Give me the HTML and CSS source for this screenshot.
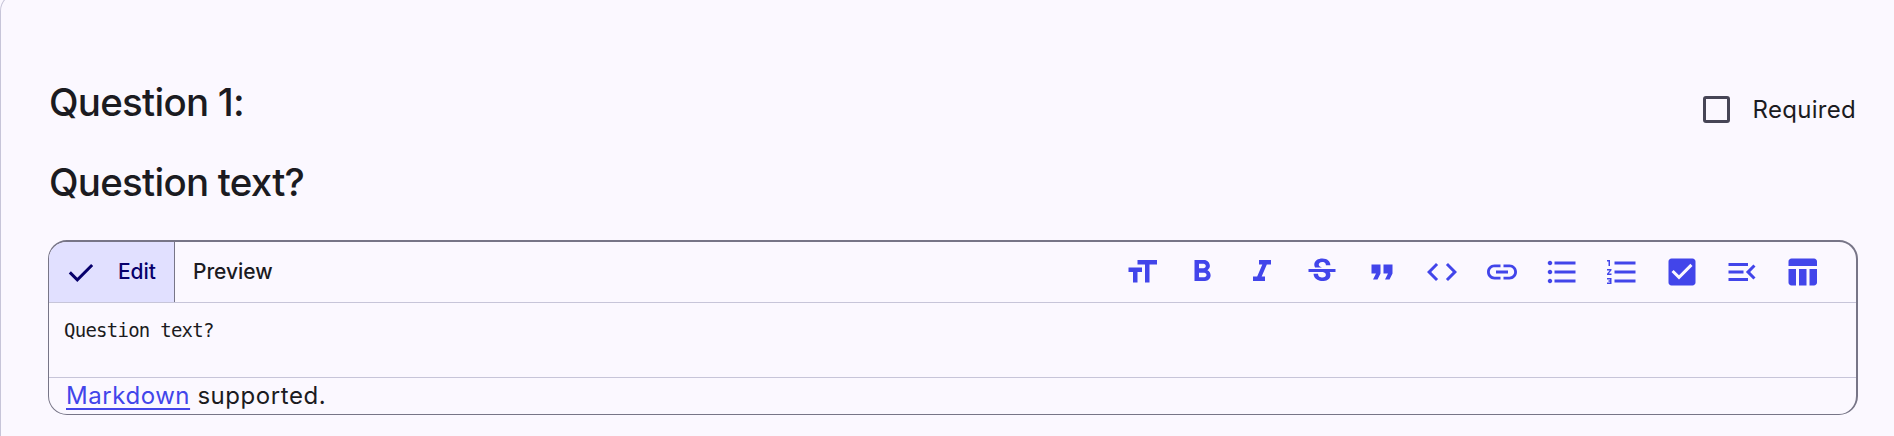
FILE: index.html
```
<!DOCTYPE html>
<html lang="en">
<head>
<meta charset="utf-8">
<title>Question editor</title>
<link rel="stylesheet" href="styles.css">
</head>
<body>
<main class="card">
  <header class="head">
    <h2 class="title">Question 1:</h2>
    <label class="required"><span class="box"></span><span class="required-text">Required</span></label>
  </header>
  <h2 class="title question">Question text?</h2>
  <section class="editor">
    <div class="toolbar">
      <div class="tab active">
        <svg class="check" viewBox="0 -960 960 960"><path d="M382-240 154-468l57-57 171 171 367-367 57 57-424 424Z"/></svg>
        <span class="tab-text">Edit</span>
      </div>
      <div class="tab preview"><span class="tab-text">Preview</span></div>
      <div class="tools">
        <svg class="icon" viewBox="0 0 24 24"><path d="M9 4v3h5v12h3V7h5V4H9zm-6 8h3v7h3v-7h3V9H3v3z"/></svg>
        <svg class="icon" viewBox="0 0 24 24"><path d="M15.6 10.79c.97-.67 1.65-1.77 1.65-2.79 0-2.26-1.75-4-4-4H7v14h7.04c2.09 0 3.71-1.7 3.71-3.79 0-1.52-.86-2.82-2.15-3.42zM10 6.5h3c.83 0 1.5.67 1.5 1.5s-.67 1.5-1.5 1.5h-3v-3zm3.5 9H10v-3h3.5c.83 0 1.5.67 1.5 1.5s-.67 1.5-1.5 1.5z"/></svg>
        <svg class="icon" viewBox="0 0 24 24"><path d="M10 4v3h2.21l-3.42 8H6v3h8v-3h-2.21l3.42-8H18V4z"/></svg>
        <svg class="icon" viewBox="0 0 24 24"><path d="M6.85 7.08C6.85 4.37 9.45 3 12.24 3c1.64 0 3 .49 3.9 1.28.77.65 1.46 1.73 1.46 3.24h-3.01c0-.31-.05-.59-.15-.85-.29-.86-1.2-1.28-2.25-1.28-1.86 0-2.34 1.02-2.34 1.7 0 .48.25.88.74 1.21.38.25.77.48 1.41.7H7.39c-.21-.34-.54-.89-.54-1.92zM21 12v-2H3v2h9.62c1.15.45 1.96.75 1.96 1.97 0 1-.81 1.67-2.28 1.67-1.54 0-2.93-.54-2.93-2.51H6.4c0 .55.08 1.13.24 1.58.81 2.29 3.29 3.3 5.67 3.3 2.27 0 5.3-.89 5.3-4.05 0-.3-.01-1.16-.48-1.94H21z"/></svg>
        <svg class="icon" viewBox="0 0 24 24"><path d="M6 17h3l2-4V7H5v6h3zm8 0h3l2-4V7h-6v6h3z"/></svg>
        <svg class="icon" viewBox="0 0 24 24"><path d="M9.4 16.6 4.8 12l4.6-4.6L8 6l-6 6 6 6zm5.2 0 4.6-4.6-4.6-4.6L16 6l6 6-6 6z"/></svg>
        <svg class="icon" viewBox="0 0 24 24"><path d="M3.9 12c0-1.71 1.39-3.1 3.1-3.1h4V7H7c-2.76 0-5 2.24-5 5s2.24 5 5 5h4v-1.9H7c-1.71 0-3.1-1.39-3.1-3.1zM8 13h8v-2H8v2zm9-6h-4v1.9h4c1.71 0 3.1 1.39 3.1 3.1s-1.39 3.1-3.1 3.1h-4V17h4c2.76 0 5-2.24 5-5s-2.24-5-5-5z"/></svg>
        <svg class="icon" viewBox="0 0 24 24"><path d="M4 10.5c-.83 0-1.5.67-1.5 1.5s.67 1.5 1.5 1.5 1.5-.67 1.5-1.5-.67-1.5-1.5-1.5zm0-6c-.83 0-1.5.67-1.5 1.5S3.17 7.5 4 7.5 5.5 6.83 5.5 6 4.83 4.5 4 4.5zm0 12c-.83 0-1.5.68-1.5 1.5s.68 1.5 1.5 1.5 1.5-.68 1.5-1.5-.67-1.5-1.5-1.5zM7 19h14v-2H7v2zm0-6h14v-2H7v2zm0-8v2h14V5H7z"/></svg>
        <svg class="icon" viewBox="0 0 24 24"><path d="M2 17h2v.5H3v1h1v.5H2v1h3v-4H2v1zm1-9h1V4H2v1h1v3zm-1 3h1.8L2 13.1v.9h3v-1H3.2L5 10.9V10H2v1zm5-6v2h14V5H7zm0 14h14v-2H7v2zm0-6h14v-2H7v2z"/></svg>
        <svg class="icon" viewBox="0 0 24 24"><path d="M19 3H5c-1.11 0-2 .9-2 2v14c0 1.1.89 2 2 2h14c1.11 0 2-.9 2-2V5c0-1.1-.89-2-2-2zm-9 14-5-5 1.41-1.41L10 14.17l7.59-7.59L19 8l-9 9z"/></svg>
        <svg class="icon" viewBox="0 0 24 24"><path d="M3 18h13v-2H3v2zm0-5h10v-2H3v2zm0-7v2h13V6H3zm18 9.59L17.42 12 21 8.41 19.59 7l-5 5 5 5z"/></svg>
        <svg class="icon" viewBox="0 0 24 24"><path d="M10 10.02h5V21h-5zM17 21h3c1.1 0 2-.9 2-2v-9h-5zm3-18H5c-1.1 0-2 .9-2 2v3h19V5c0-1.1-.9-2-2-2zM3 19c0 1.1.9 2 2 2h3V10H3z"/></svg>
      </div>
    </div>
    <div class="source">Question text?</div>
    <div class="hint"><a class="link">Markdown</a> supported.</div>
  </section>
</main>
</body>
</html>
```

FILE: styles.css
```
* { box-sizing: border-box; }
body {
  display: flow-root;
  margin: 0;
  background: #fbf8ff;
  color: #1b1b21;
  font-family: Inter, sans-serif;
}
.card {
  height: 443px;
  margin-top: -7px;
  padding: 82px 36px 0 47px;
  border-left: 1px solid #c7c5d9;
  border-top: 1px solid #c7c5d9;
  border-top-left-radius: 18px;
}
.head {
  display: flex;
  justify-content: space-between;
  height: 80px;
}
.title {
  margin: 0;
  padding-left: 1px;
  font-size: 38.5px;
  font-weight: 500;
  line-height: 53px;
  letter-spacing: -0.75px;
}
.question { height: 84px; }
.required {
  display: flex;
  align-items: center;
  gap: 22px;
  height: 67px;
  padding-right: 2px;
}
.box {
  width: 27px;
  height: 27px;
  border: 3px solid #464556;
  border-radius: 3px;
}
.required-text { font-size: 24px; letter-spacing: 0.3px; }
.editor {
  height: 175px;
  border: 1px solid #777587;
  border-top-width: 2px;
  border-right-width: 2px;
  border-radius: 19px;
  overflow: hidden;
}
.toolbar {
  display: flex;
  height: 61px;
  border-bottom: 1px solid #c7c5d9;
}
.tab {
  display: flex;
  align-items: center;
  font-size: 21px;
  font-weight: 500;
  letter-spacing: -0.05px;
}
.tab-text { padding-bottom: 2px; }
.active {
  width: 126px;
  padding-left: 14px;
  gap: 19px;
  background: #e1e0ff;
  border-right: 1px solid #777587;
  color: #07006c;
}
.check {
  width: 36px;
  height: 36px;
  margin-top: 2px;
  fill: currentColor;
}
.preview { padding-left: 18px; }
.tools {
  display: flex;
  align-items: center;
  gap: 24px;
  margin-left: auto;
  padding-right: 36.5px;
}
.icon { width: 36px; height: 36px; fill: #4245ea; }
.source {
  height: 75px;
  padding: 15px 15px;
  border-bottom: 1px solid #c7c5d9;
  font-family: "DejaVu Sans Mono", monospace;
  font-size: 19px;
  line-height: 24px;
  letter-spacing: -0.75px;
}
.hint {
  padding-left: 17px;
  font-size: 24px;
  line-height: 36px;
  letter-spacing: 0.55px;
}
.link {
  color: #4245ea;
  text-decoration: underline;
  text-decoration-thickness: 2px;
  text-underline-offset: 4px;
  text-decoration-skip-ink: none;
}
```
